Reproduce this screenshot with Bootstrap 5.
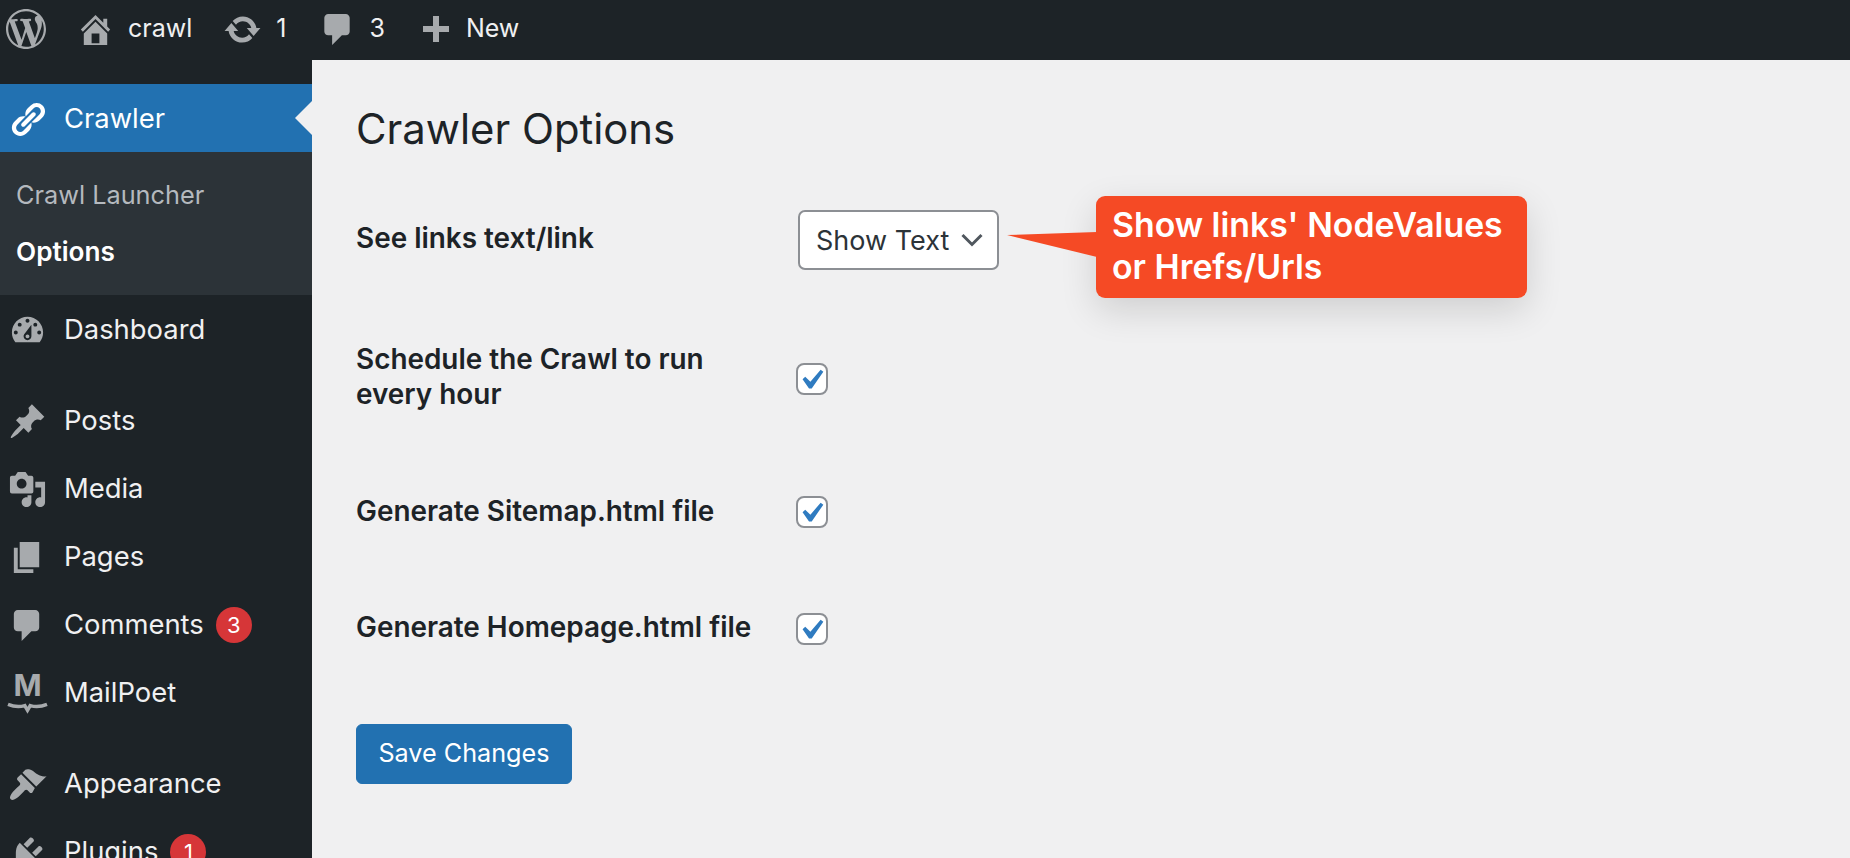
<!DOCTYPE html>
<html lang="en">
<head>
  <meta charset="UTF-8" />
  <meta name="viewport" content="width=device-width, initial-scale=1" />
  <title>Crawler Options</title>
  <link href="https://cdn.jsdelivr.net/npm/bootstrap@5.3.0/dist/css/bootstrap.min.css" rel="stylesheet" />
  <style>
    html, body { height: 100%; overflow: hidden; }
    body { font-family: Inter, "Noto Sans", sans-serif; background: #f0f0f1; color: #1d2327; }
    svg { fill: currentColor; flex: none; display: block; }

    .wp-topbar { height: 60px; background: #1d2327; color: #f0f0f1; font-size: 25px; padding-bottom: 2px; }
    .wp-topbar svg { color: #a7aaad; }
    .bar-item { display: flex; align-items: center; }
    .bar-logo { margin-left: 6px; }
    .bar-site { margin-left: 30px; gap: 13px; }
    .bar-update { margin-left: 31px; gap: 14px; }
    .bar-comments { margin-left: 36px; gap: 17px; }
    .bar-new { margin-left: 38px; gap: 17px; }
    .bar-comment-icon { width: 30px; height: 39px; }

    .wp-layout { height: 798px; }
    .wp-side { width: 312px; flex: none; background: #1d2327; color: #f0f0f1; padding-top: 24px; overflow: hidden; font-size: 27.4px; }
    .side-link { height: 68px; padding: 2px 0 0 8px; gap: 17px; display: flex; align-items: center; color: #f0f0f1; text-decoration: none; }
    .side-link svg { color: #a7aaad; }
    .side-link.is-current { background: #2271b1; color: #fff; position: relative; }
    .side-link.is-current svg { color: #fff; }
    .current-arrow { position: absolute; right: 0; top: 50%; margin-top: -17px; border: 17px solid transparent; border-right-color: #f0f0f1; border-left: 0; }
    .side-sub { background: #2c3338; height: 143px; padding-top: 19px; }
    .side-sub a { display: block; height: 56px; line-height: 48px; padding-left: 16px; color: #b4b9be; text-decoration: none; font-size: 25.3px; }
    .side-sub a.is-on { color: #fff; font-weight: 600; font-size: 26.2px; line-height: 50px; }
    .side-gap { height: 23px; }
    .side-count { width: 36px; height: 36px; border-radius: 50%; background: #d63638; color: #fff; font-size: 22px; display: flex; align-items: center; justify-content: center; margin-left: -5px; }
    .logo-mp { overflow: visible; }
    .logo-m { font-family: Inter, sans-serif; font-weight: 700; font-size: 15.5px; }
    .logo-swoosh { fill: none; stroke: currentColor; stroke-width: 1.8; }

    .wp-main { flex: 1; position: relative; padding-left: 44px; }
    .page-title { font-size: 41.8px; font-weight: 400; line-height: 1; margin: 49px 0 0; }
    .opt-row { display: flex; align-items: center; padding: 39px 0; }
    .opt-label { width: 440px; flex: none; font-size: 27.9px; font-weight: 600; line-height: 35.5px; }
    .opt-label span { display: block; width: 400px; }
    .row-links { margin-top: 20px; }
    .row-links .opt-label { margin-top: -3px; }
    .row-hour { padding: 33px 0 42px; }
    .row-hour .opt-check.form-check-input { margin-top: 4px; }
    .row-home { padding-top: 41px; }
    .row-home .opt-check.form-check-input { margin-top: 4px; }
    .opt-select.form-select { width: 201px; height: 60px; margin-left: 2px; padding: 2px 0 0 16px; border: 2px solid #8c8f94; border-radius: 7px; font-size: 27px; color: #2c3338; background-image: url("data:image/svg+xml,%3Csvg xmlns='http://www.w3.org/2000/svg' viewBox='0 0 22 14'%3E%3Cpath fill='none' stroke='%2350575e' stroke-width='3' d='M1.5 2L11 11.5 20.5 2'/%3E%3C/svg%3E"); background-position: right 14px center; background-size: 22px 14px; font-family: inherit; }
    .opt-check.form-check-input { width: 32px; height: 32px; margin: 0; border: 2px solid #8c8f94; border-radius: 8px; background-color: #fff; background-size: 100% 100%; background-image: url("data:image/svg+xml,%3Csvg xmlns='http://www.w3.org/2000/svg' viewBox='3.5 2.5 14 14'%3E%3Cpath fill='%232f7bc0' d='M14.83 4.89l1.34.94-5.81 8.38H9.02L5.78 9.67l1.34-1.25 2.57 2.4z'/%3E%3C/svg%3E"); }
    .save-btn.btn { width: 216px; height: 60px; margin-top: 40px; background: #2271b1; border-color: #2271b1; color: #fff; font-size: 25.2px; border-radius: 6px; padding: 0; }

    .note-box { position: absolute; left: 784px; top: 136px; width: 431px; height: 102px; background: #f54a25; color: #fff; border-radius: 9px; padding: 8px 0 0 16px; font-size: 33.8px; font-weight: 600; line-height: 42px; box-shadow: 0 12px 36px rgba(0,0,0,.14); }
    .note-tail { position: absolute; left: -89px; top: 36px; color: #f54a25; }
  </style>
</head>
<body>

<header class="wp-topbar d-flex align-items-center">
  <div class="bar-item bar-logo">
    <svg width="40" height="40" viewBox="0 0 20 20"><path d="M20 10c0-5.51-4.49-10-10-10C4.48 0 0 4.49 0 10c0 5.52 4.48 10 10 10 5.51 0 10-4.48 10-10zM7.78 15.37L4.37 6.22c.55-.02 1.17-.08 1.17-.08.5-.06.44-1.13-.06-1.11 0 0-1.45.11-2.37.11-.18 0-.37 0-.58-.01C4.12 2.69 6.87 1.11 10 1.11c2.33 0 4.45.87 6.05 2.34-.68-.11-1.65.39-1.65 1.58 0 .74.45 1.36.9 2.1.35.61.55 1.36.55 2.46 0 1.49-1.4 5-1.4 5l-3.03-8.37c.54-.02.82-.17.82-.17.5-.05.44-1.25-.06-1.22 0 0-1.44.12-2.38.12-.87 0-2.33-.12-2.33-.12-.5-.03-.56 1.2-.06 1.22l.92.08 1.26 3.41zM17.41 10c.24-.64.74-1.87.43-4.25.7 1.29 1.05 2.71 1.05 4.25 0 3.29-1.73 6.24-4.4 7.78.97-2.59 1.94-5.2 2.92-7.78zM6.1 18.09C3.12 16.65 1.11 13.53 1.11 10c0-1.3.23-2.48.72-3.59C3.25 10.3 4.67 14.2 6.1 18.09zm4.03-6.63l2.58 6.98c-.86.29-1.76.45-2.71.45-.79 0-1.57-.11-2.29-.33.81-2.38 1.62-4.74 2.42-7.1z"/></svg>
  </div>
  <div class="bar-item bar-site">
    <svg width="39" height="39" viewBox="0 0 20 20"><path d="M16 8.5l1.53 1.53-1.06 1.06L10 4.62l-6.47 6.47-1.06-1.06L10 2.5l4 4v-2h2v4zm-6-2.46l6 5.99V18H4v-5.97zM12 17v-5H8v5h4z"/></svg>
    <span>crawl</span>
  </div>
  <div class="bar-item bar-update">
    <svg width="39" height="39" viewBox="0 0 20 20"><path d="M10.2 3.28c3.53 0 6.43 2.61 6.92 6h2.08l-3.5 4-3.5-4h2.32c-.45-1.97-2.21-3.45-4.32-3.45-1.45 0-2.73.71-3.54 1.78L4.95 5.66C6.23 4.2 8.11 3.28 10.2 3.28zm-.4 13.44c-3.52 0-6.43-2.61-6.92-6H.8l3.5-4c1.17 1.33 2.33 2.67 3.5 4H5.48c.45 1.97 2.21 3.45 4.32 3.45 1.45 0 2.73-.71 3.54-1.78l1.71 1.95c-1.28 1.46-3.15 2.38-5.25 2.38z"/></svg>
    <span>1</span>
  </div>
  <div class="bar-item bar-comments">
    <svg class="bar-comment-icon" viewBox="2 0 15 20"><path d="M5 2h9c1.1 0 2 .9 2 2v7c0 1.1-.9 2-2 2h-2l-5 5v-5H5c-1.1 0-2-.9-2-2V4c0-1.1.9-2 2-2z"/></svg>
    <span>3</span>
  </div>
  <div class="bar-item bar-new">
    <svg width="26" height="26" viewBox="4 2 13 13"><path d="M17 7v3h-5v5H9v-5H4V7h5V2h3v5h5z"/></svg>
    <span>New</span>
  </div>
</header>

<div class="wp-layout d-flex">
  <nav class="wp-side">
    <a class="side-link is-current" href="#">
      <svg width="39" height="39" viewBox="0 0 20 20"><path d="M17.74 2.76c1.68 1.69 1.68 4.41 0 6.1l-1.53 1.52c-1.12 1.12-2.7 1.47-4.14 1.09l2.62-2.61.76-.77.76-.76c.84-.84.84-2.2 0-3.04-.84-.85-2.2-.85-3.04 0l-.77.76-3.38 3.38c-.37-1.44-.02-3.02 1.1-4.14l1.52-1.53c1.69-1.68 4.42-1.68 6.1 0zM8.59 13.43l5.34-5.34c.42-.42.42-1.1 0-1.52-.44-.43-1.13-.39-1.53 0l-5.33 5.34c-.42.42-.42 1.1 0 1.52.44.43 1.13.39 1.52 0zm-.76 2.29l4.14-4.15c.38 1.44.03 3.02-1.09 4.14l-1.52 1.53c-1.69 1.68-4.41 1.68-6.1 0-1.68-1.68-1.68-4.42 0-6.1l1.53-1.52c1.12-1.12 2.7-1.47 4.14-1.1l-4.14 4.15c-.85.84-.85 2.2 0 3.05.84.84 2.2.84 3.04 0z"/></svg>
      <span>Crawler</span>
      <i class="current-arrow"></i>
    </a>
    <div class="side-sub">
      <a href="#">Crawl Launcher</a>
      <a class="is-on" href="#">Options</a>
    </div>
    <a class="side-link" href="#">
      <svg width="39" height="39" viewBox="0 0 20 20"><path fill-rule="evenodd" d="M3.76 16h12.48c1.1-1.37 1.76-3.11 1.76-5 0-4.42-3.58-8-8-8s-8 3.58-8 8c0 1.89.66 3.63 1.76 5zM10 4c.55 0 1 .45 1 1s-.45 1-1 1-1-.45-1-1 .45-1 1-1zM6 6c.55 0 1 .45 1 1s-.45 1-1 1-1-.45-1-1 .45-1 1-1zm8 0c.55 0 1 .45 1 1s-.45 1-1 1-1-.45-1-1 .45-1 1-1zm-5.37 5.55L12 7v6c0 1.1-.9 2-2 2s-2-.9-2-2c0-.57.24-1.08.63-1.45zM4 10c.55 0 1 .45 1 1s-.45 1-1 1-1-.45-1-1 .45-1 1-1zm12 0c.55 0 1 .45 1 1s-.45 1-1 1-1-.45-1-1 .45-1 1-1zm-5 3c0-.55-.45-1-1-1s-1 .45-1 1 .45 1 1 1 1-.45 1-1z"/></svg>
      <span>Dashboard</span>
    </a>
    <div class="side-gap"></div>
    <a class="side-link" href="#">
      <svg width="39" height="39" viewBox="0 0 20 20"><path d="M10.44 3.02l1.82-1.82 6.36 6.35-1.83 1.82c-1.05-.68-2.48-.57-3.41.36l-.75.75c-.92.93-1.04 2.35-.35 3.41l-1.83 1.82-2.41-2.41-2.8 2.79c-.42.42-3.38 2.71-3.8 2.29s1.86-3.39 2.28-3.81l2.79-2.79L4.1 9.36l1.83-1.82c1.05.69 2.48.57 3.4-.36l.75-.75c.93-.92 1.05-2.35.36-3.41z"/></svg>
      <span>Posts</span>
    </a>
    <a class="side-link" href="#">
      <svg width="39" height="39" viewBox="0 0 20 20"><path d="M13 11V4c0-.55-.45-1-1-1h-1.67L9 1H5L3.67 3H2c-.55 0-1 .45-1 1v7c0 .55.45 1 1 1h10c.55 0 1-.45 1-1zM7 4.5c1.38 0 2.5 1.12 2.5 2.5S8.38 9.5 7 9.5 4.5 8.38 4.5 7 5.62 4.5 7 4.5zM14 6h5v10.5c0 1.38-1.12 2.5-2.5 2.5S14 17.88 14 16.5s1.12-2.5 2.5-2.5c.17 0 .34.02.5.05V9h-3V6zm-4 8.05V13h2v3.5c0 1.38-1.12 2.5-2.5 2.5S7 17.88 7 16.5 8.12 14 9.5 14c.17 0 .34.02.5.05z"/></svg>
      <span>Media</span>
    </a>
    <a class="side-link" href="#">
      <svg width="39" height="39" viewBox="0 0 20 20"><path d="M6 15V2h10v13H6zm-1 1h8v2H3V5h2v11z"/></svg>
      <span>Pages</span>
    </a>
    <a class="side-link" href="#">
      <svg width="39" height="39" viewBox="0 0 20 20"><path d="M5 2h9c1.1 0 2 .9 2 2v7c0 1.1-.9 2-2 2h-2l-5 5v-5H5c-1.1 0-2-.9-2-2V4c0-1.1.9-2 2-2z"/></svg>
      <span>Comments</span>
      <span class="side-count">3</span>
    </a>
    <a class="side-link" href="#">
      <svg class="logo-mp" width="39" height="39" viewBox="0 0 20 20"><text class="logo-m" x="10" y="11.5" text-anchor="middle">M</text><path class="logo-swoosh" d="M0 15.6c3 1.2 6.5 1.2 8.6.6l1.4 2.4 1.4-2.4c2.1.6 5.6.6 8.6-.6"/></svg>
      <span>MailPoet</span>
    </a>
    <div class="side-gap"></div>
    <a class="side-link" href="#">
      <svg width="39" height="39" viewBox="0 0 20 20"><path d="M14.48 11.06L7.41 3.99l1.5-1.5c.5-.56 2.3-.47 3.51.32 1.21.8 1.43 1.28 2.91 2.1 1.18.64 2.45 1.26 4.45.85zm-.71.71L6.7 4.7 4.93 6.47c-.39.39-.39 1.02 0 1.41l1.06 1.06c.39.39.39 1.03 0 1.42-.6.6-6.48 5.37-4.6 7.25 1.88 1.88 6.65-4 7.25-4.6.39-.39 1.02-.39 1.41 0l1.06 1.06c.39.39 1.02.39 1.41 0z"/></svg>
      <span>Appearance</span>
    </a>
    <a class="side-link" href="#">
      <svg width="39" height="39" viewBox="0 0 20 20"><path d="M13.11 4.36L9.87 7.6 8 5.73l3.24-3.24c.35-.34 1.05-.2 1.56.32.52.51.66 1.21.31 1.55zm-8 1.77l.91-1.12 9.01 9.01-1.19.84c-.71.71-2.63 1.16-3.82 1.16H6.14L4.9 17.26c-.59.59-1.54.59-2.12 0-.59-.58-.59-1.53 0-2.12l1.24-1.24v-3.88c0-1.13.4-3.19 1.09-3.89zm7.26 3.97l3.24-3.24c.34-.35 1.04-.21 1.55.31.52.51.66 1.21.31 1.55l-3.24 3.25z"/></svg>
      <span>Plugins</span>
      <span class="side-count">1</span>
    </a>
  </nav>

  <main class="wp-main">
    <h1 class="page-title">Crawler Options</h1>

    <form>
      <div class="opt-row row-links">
        <label class="opt-label"><span>See links text/link</span></label>
        <select class="form-select opt-select"><option>Show Text</option><option>Show Link</option></select>
      </div>
      <div class="opt-row row-hour">
        <label class="opt-label"><span>Schedule the Crawl to run every hour</span></label>
        <input class="form-check-input opt-check" type="checkbox" checked />
      </div>
      <div class="opt-row">
        <label class="opt-label"><span>Generate Sitemap.html file</span></label>
        <input class="form-check-input opt-check" type="checkbox" checked />
      </div>
      <div class="opt-row row-home">
        <label class="opt-label"><span>Generate Homepage.html file</span></label>
        <input class="form-check-input opt-check" type="checkbox" checked />
      </div>
      <button type="button" class="btn save-btn">Save Changes</button>
    </form>

    <div class="note-box">
      <svg class="note-tail" width="90" height="30" viewBox="0 0 90 30"><polygon points="0,3 90,0 90,25"/></svg>
      Show links' NodeValues<br />or Hrefs/Urls
    </div>
  </main>
</div>

<script src="https://cdn.jsdelivr.net/npm/bootstrap@5.3.0/dist/js/bootstrap.bundle.min.js"></script>
</body>
</html>
